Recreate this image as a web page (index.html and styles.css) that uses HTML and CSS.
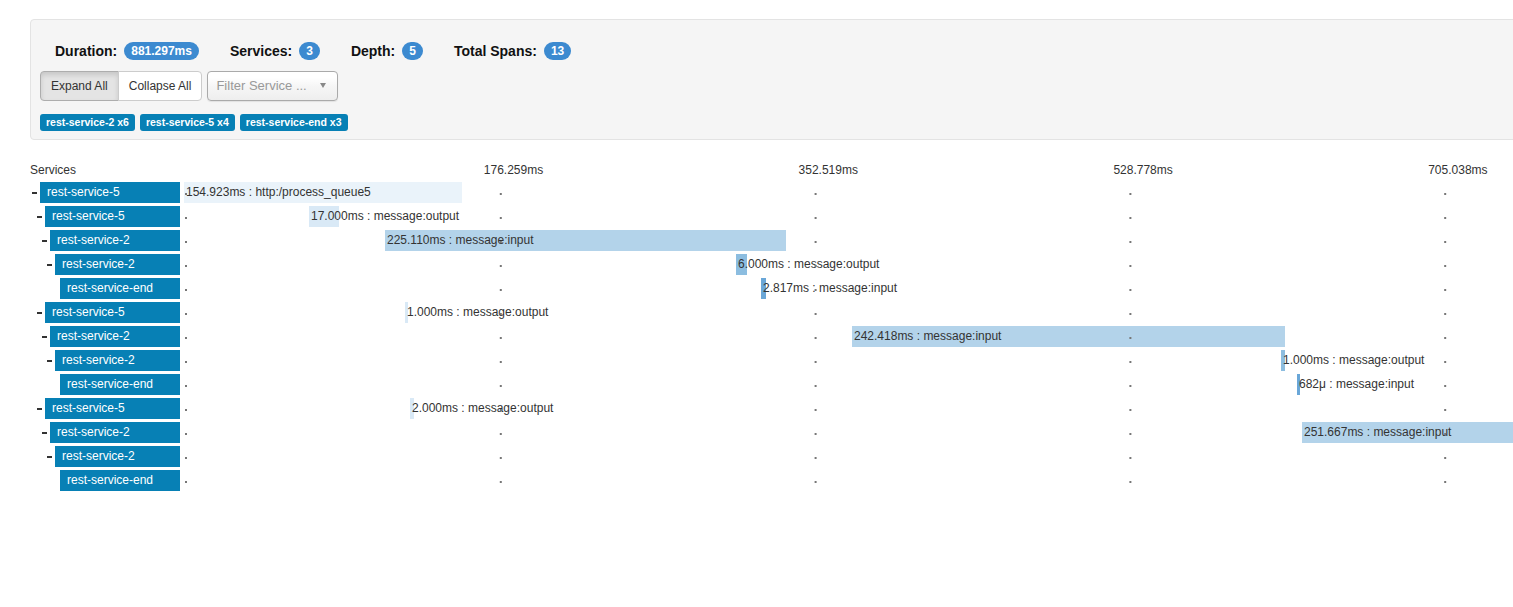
FILE: index.html
```html
<!DOCTYPE html>
<html lang="en">
<head>
  <meta charset="UTF-8">
  <meta name="viewport" content="width=device-width, initial-scale=1.0">
  <title>Trace - rest-service-5</title>
  <link rel="stylesheet" href="styles.css">
</head>
<body>

  <div class="page">

    <div class="trace-summary">
      <ul class="trace-stats">
        <li><strong>Duration:</strong><span class="badge">881.297ms</span></li>
        <li><strong>Services:</strong><span class="badge">3</span></li>
        <li><strong>Depth:</strong><span class="badge">5</span></li>
        <li><strong>Total Spans:</strong><span class="badge">13</span></li>
      </ul>

      <div class="trace-controls">
        <div class="btn-group">
          <button class="btn active">Expand All</button>
          <button class="btn">Collapse All</button>
        </div>
        <div class="service-filter">
          <span>Filter Service ...</span>
          <span class="caret"></span>
        </div>
      </div>

      <div class="service-tags">
        <span class="service-tag">rest-service-2 x6</span>
        <span class="service-tag">rest-service-5 x4</span>
        <span class="service-tag">rest-service-end x3</span>
      </div>
    </div>

    <div class="trace-view">
      <div class="trace-head">
        <div class="service-col">Services</div>
        <div class="timeline">
          <span class="time-marker" style="left: 20%">176.259ms</span>
          <span class="time-marker" style="left: 40%">352.519ms</span>
          <span class="time-marker" style="left: 60%">528.778ms</span>
          <span class="time-marker" style="left: 80%">705.038ms</span>
        </div>
      </div>

      <div class="span-row depth-1">
        <div class="service-col"><span class="toggle open"></span><span class="service-name">rest-service-5</span></div>
        <div class="timeline">
          <div class="bar level-1" style="left: 0px; width: 278px;"><span>154.923ms : http:/process_queue5</span></div>
        </div>
      </div>

      <div class="span-row depth-2">
        <div class="service-col"><span class="toggle open"></span><span class="service-name">rest-service-5</span></div>
        <div class="timeline">
          <div class="bar level-2" style="left: 125px; width: 30px;"><span>17.000ms : message:output</span></div>
        </div>
      </div>

      <div class="span-row depth-3">
        <div class="service-col"><span class="toggle open"></span><span class="service-name">rest-service-2</span></div>
        <div class="timeline">
          <div class="bar level-3" style="left: 201px; width: 401px;"><span>225.110ms : message:input</span></div>
        </div>
      </div>

      <div class="span-row depth-4">
        <div class="service-col"><span class="toggle open"></span><span class="service-name">rest-service-2</span></div>
        <div class="timeline">
          <div class="bar level-4" style="left: 552px; width: 11px;"><span>6.000ms : message:output</span></div>
        </div>
      </div>

      <div class="span-row depth-5">
        <div class="service-col"><span class="toggle"></span><span class="service-name">rest-service-end</span></div>
        <div class="timeline">
          <div class="bar level-5" style="left: 577px; width: 5px;"><span>2.817ms : message:input</span></div>
        </div>
      </div>

      <div class="span-row depth-2">
        <div class="service-col"><span class="toggle open"></span><span class="service-name">rest-service-5</span></div>
        <div class="timeline">
          <div class="bar level-2" style="left: 221px; width: 3px;"><span>1.000ms : message:output</span></div>
        </div>
      </div>

      <div class="span-row depth-3">
        <div class="service-col"><span class="toggle open"></span><span class="service-name">rest-service-2</span></div>
        <div class="timeline">
          <div class="bar level-3" style="left: 668px; width: 433px;"><span>242.418ms : message:input</span></div>
        </div>
      </div>

      <div class="span-row depth-4">
        <div class="service-col"><span class="toggle open"></span><span class="service-name">rest-service-2</span></div>
        <div class="timeline">
          <div class="bar level-4" style="left: 1097px; width: 4px;"><span>1.000ms : message:output</span></div>
        </div>
      </div>

      <div class="span-row depth-5">
        <div class="service-col"><span class="toggle"></span><span class="service-name">rest-service-end</span></div>
        <div class="timeline">
          <div class="bar level-5" style="left: 1113px; width: 3px;"><span>682μ : message:input</span></div>
        </div>
      </div>

      <div class="span-row depth-2">
        <div class="service-col"><span class="toggle open"></span><span class="service-name">rest-service-5</span></div>
        <div class="timeline">
          <div class="bar level-2" style="left: 226px; width: 4px;"><span>2.000ms : message:output</span></div>
        </div>
      </div>

      <div class="span-row depth-3">
        <div class="service-col"><span class="toggle open"></span><span class="service-name">rest-service-2</span></div>
        <div class="timeline">
          <div class="bar level-3" style="left: 1118px; width: 450px;"><span>251.667ms : message:input</span></div>
        </div>
      </div>

      <div class="span-row depth-4">
        <div class="service-col"><span class="toggle open"></span><span class="service-name">rest-service-2</span></div>
        <div class="timeline"></div>
      </div>

      <div class="span-row depth-5">
        <div class="service-col"><span class="toggle"></span><span class="service-name">rest-service-end</span></div>
        <div class="timeline"></div>
      </div>
    </div>

  </div>

</body>
</html>
```

FILE: styles.css
```css
* {
  margin: 0;
  padding: 0;
  box-sizing: border-box;
}

body {
  background-color: #fff;
  color: #333;
  font-family: 'Liberation Sans', Arial, sans-serif;
  font-size: 12px;
  overflow: hidden;
}

.page {
  width: 1800px;
  padding: 19px 0 0 30px;
}

/* Summary well */
.trace-summary {
  background-color: #f5f5f5;
  border: 1px solid #e3e3e3;
  border-radius: 4px;
  padding: 22px 9px 8px;
}

.trace-stats {
  list-style: none;
  display: flex;
  gap: 31px;
  padding-left: 15px;
  height: 18px;
}

.trace-stats li {
  display: flex;
  align-items: center;
  gap: 7px;
  line-height: 18px;
}

.trace-stats strong {
  font-size: 14px;
  color: #111;
}

.badge {
  display: inline-block;
  height: 18px;
  padding: 0 7px;
  border-radius: 9px;
  background-color: #3c8ad0;
  color: #fff;
  font-size: 12px;
  font-weight: bold;
  line-height: 18px;
}

.trace-controls {
  display: flex;
  margin-top: 11px;
  height: 30px;
}

.btn-group {
  display: flex;
}

.btn {
  height: 30px;
  padding: 0 10px;
  border: 1px solid #ccc;
  background-color: #fff;
  color: #333;
  font-family: inherit;
  font-size: 12px;
  cursor: pointer;
}

.btn:first-child {
  border-radius: 4px 0 0 4px;
}

.btn:last-child {
  margin-left: -1px;
  border-radius: 0 4px 4px 0;
}

.btn.active {
  background-color: #e4e4e4;
  border-color: #adadad;
  box-shadow: inset 0 3px 5px rgba(0, 0, 0, 0.125);
}

.service-filter {
  display: flex;
  align-items: center;
  justify-content: space-between;
  width: 131px;
  margin-left: 5px;
  padding: 0 11px 2px 8px;
  border: 1px solid #aaa;
  border-radius: 4px;
  background: linear-gradient(to bottom, #fff 20%, #f6f6f6 50%, #eee 100%);
  box-shadow: 0 1px 1px rgba(0, 0, 0, 0.08);
  color: #999;
  font-size: 13px;
}

.caret {
  border-left: 3px solid transparent;
  border-right: 3px solid transparent;
  border-top: 5px solid #888;
}

.service-tags {
  display: flex;
  gap: 5px;
  margin-top: 13px;
}

.service-tag {
  padding: 2px 6px 3px;
  border-radius: 3px;
  background-color: #0780b5;
  color: #fff;
  font-size: 10.5px;
  font-weight: bold;
  line-height: 12px;
}

/* Trace timeline */
.trace-view {
  margin-top: 18px;
}

.trace-head {
  display: flex;
  height: 24px;
  padding-top: 2px;
  line-height: 20px;
}

.trace-head .timeline {
  height: 20px;
}

.time-marker {
  position: absolute;
  top: 0;
  margin-left: -15px;
  white-space: nowrap;
}

.span-row {
  display: flex;
  height: 21px;
  margin-bottom: 3px;
}

.service-col {
  display: flex;
  flex-shrink: 0;
  width: 150px;
}

.depth-2 .service-col { padding-left: 5px; }
.depth-3 .service-col { padding-left: 10px; }
.depth-4 .service-col { padding-left: 15px; }
.depth-5 .service-col { padding-left: 20px; }

.toggle {
  position: relative;
  width: 10px;
}

.toggle.open::before {
  content: '';
  position: absolute;
  top: 10px;
  left: 2px;
  width: 5px;
  height: 2px;
  background-color: #333;
}

.service-name {
  flex: 1;
  padding-left: 7px;
  background-color: #0780b5;
  color: #fff;
  line-height: 21px;
  white-space: nowrap;
}

.timeline {
  position: relative;
  flex-shrink: 0;
  width: 1574px;
  margin-left: 4px;
}

.span-row .timeline::after {
  content: '';
  position: absolute;
  top: 0;
  left: 0;
  right: 0;
  bottom: 0;
  background: linear-gradient(to right, #777 2px, transparent 2px) 1px 11px / 314.8px 2px repeat-x;
}

.bar {
  position: absolute;
  top: 0;
  height: 21px;
  line-height: 21px;
  white-space: nowrap;
}

.bar span {
  padding-left: 2px;
  color: #333;
}

.level-1 { background-color: #eaf3fa; }
.level-2 { background-color: #d9e9f6; }
.level-3 { background-color: #b3d3ea; }
.level-4 { background-color: #8cbde0; }
.level-5 { background-color: #6aa7d8; }
```
